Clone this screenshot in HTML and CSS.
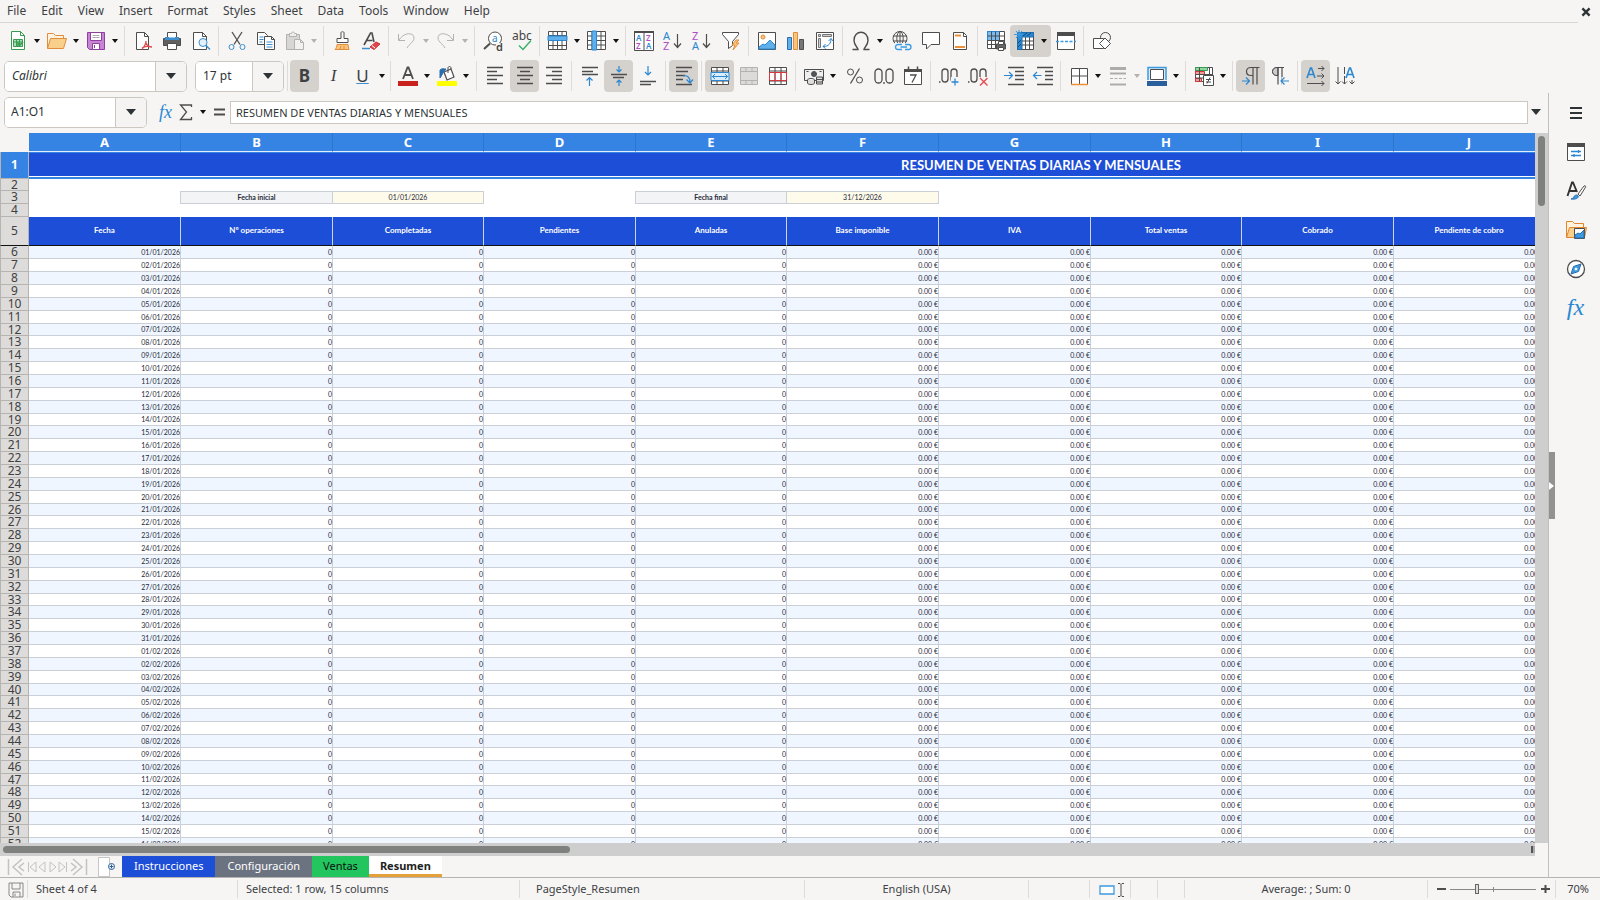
FILE: index.html
```html
<!DOCTYPE html>
<html lang="en">
<head>
<meta charset="utf-8">
<title>Resumen</title>
<link rel="stylesheet" href="styles.css">
</head>
<body>
<header class="menubar">
  <nav class="menus" aria-label="Menu">
    <button>File</button><button>Edit</button><button>View</button><button>Insert</button><button>Format</button><button>Styles</button><button>Sheet</button><button>Data</button><button>Tools</button><button>Window</button><button>Help</button>
  </nav>
  <button class="close" aria-label="Close"><svg class="ic" viewBox="0 0 10 10"><path d="M2 2l6 6M8 2L2 8" stroke="#2e3436" stroke-width="2"/></svg></button>
</header>

<div class="toolbar" role="toolbar" aria-label="Standard">
  <span class="drop"><button class="tb" aria-label="New"><svg class="ic" viewBox="0 0 20 20"><g stroke="#3a9a52"><path d="M3.500.5h9l4 4v14h-13z" fill="#fff"/><path d="M12.500.5v4h4"/><path d="M5.500 8.500h9v7h-9zM5.500 11h9M8.500 8.500v7M11.500 8.500v7" fill="#a9dfb8"/><path d="M10 15v-3l2 2 3-3" stroke-width="1.500"/></g></svg></button><button class="arrow" aria-label="New options"></button></span>
  <span class="drop"><button class="tb" aria-label="Open"><svg class="ic" viewBox="0 0 20 20"><path d="M.5 17.500v-15h6l2 2h8v3" fill="#fff3e0" stroke="#e08e3c"/><path d="M.5 17.500l3-10h16l-3 10z" fill="#f9d08b" stroke="#e08e3c"/></svg></button><button class="arrow" aria-label="Open options"></button></span>
  <span class="drop"><button class="tb" aria-label="Save"><svg class="ic" viewBox="0 0 20 20"><path d="M1.500 1.500h17v17h-15l-2-2z" fill="#c885d4" stroke="#8e3fa0"/><path d="M4.500 1.500h11v8h-11z" fill="#fff" stroke="#8e3fa0"/><path d="M6.500 4.500h7M6.500 6.500h7" stroke="#aaa"/><path d="M6.500 12.500h7v6h-7z" fill="#fff" stroke="#8e3fa0"/><path d="M8.500 14v3" stroke="#8e3fa0"/></svg></button><button class="arrow" aria-label="Save options"></button></span>
  <i class="sep"></i>
  <button class="tb" aria-label="Export as PDF"><svg class="ic" viewBox="0 0 20 20"><path d="M3.500 1.500h8l4 4v13h-12z" fill="#fff"/><path d="M11.500 1.500v4h4"/><path d="M9 18c2-2 4-5 4-8M13 12c1 3 3 4 6 4M9 17c3-2 6-2 9-1" stroke="#e2474b" stroke-width="1.300"/></svg></button>
  <button class="tb" aria-label="Print"><svg class="ic" viewBox="0 0 20 20"><path d="M1.500 7.500h17v7h-17z" fill="#606060"/><path d="M5.500 1.500h9v6h-9z" fill="#fff"/><path d="M3 9h14V6H3z" fill="#3b8fd0" stroke="none"/><path d="M5.500 12.500h9v6h-9z" fill="#fff"/><path d="M7 6h6" stroke="#fff"/></svg></button>
  <button class="tb" aria-label="Print preview"><svg class="ic" viewBox="0 0 20 20"><path d="M2.500 1.500h9l4 4v13h-13z" fill="#fff"/><path d="M11.500 1.500v4h4"/><circle cx="12" cy="11.500" r="4" fill="#e2f1fb" stroke="#3b8fd0"/><path d="M15 14.500l4 4" stroke="#3b8fd0" stroke-width="1.500"/></svg></button>
  <i class="sep"></i>
  <button class="tb" aria-label="Cut"><svg class="ic" viewBox="0 0 20 20"><path d="M5 1l8 12.500M15 1L7 13.500" stroke-width="1.300"/><circle cx="4.500" cy="16" r="2.500" stroke="#3b8fd0"/><circle cx="15.500" cy="16" r="2.500" stroke="#3b8fd0"/></svg></button>
  <button class="tb" aria-label="Copy"><svg class="ic" viewBox="0 0 20 20"><path d="M1.500 1.500h7l3 3v9h-10z" fill="#fff"/><path d="M3.500 6h4M3.500 8.500h4M3.500 11h3" stroke="#3b8fd0"/><path d="M8.500 5.500h7l3 3v10h-10z" fill="#fff"/><path d="M15.500 5.500v3h3"/><path d="M10.500 11h6M10.500 13.500h6M10.500 16h6" stroke="#3b8fd0"/></svg></button>
  <span class="drop off"><button class="tb" aria-label="Paste" disabled><svg class="ic" viewBox="0 0 20 20"><g stroke="#b4b2b0"><path d="M1.500 3.500h13v15h-13z" fill="#d8d6d4"/><path d="M4.500 5.500v-3h2c0-2 3-2 3 0h2v3z" fill="#eee"/><path d="M9.500 8.500h6l3 3v7h-9z" fill="#f2f1f0"/><path d="M15.500 8.500v3h3"/></g></svg></button><button class="arrow" aria-label="Paste options" disabled></button></span>
  <i class="sep"></i>
  <button class="tb" aria-label="Clone formatting"><svg class="ic" viewBox="0 0 20 20"><path d="M9 1.500c0-1 3-1 3 0v6h4v4H5v-4h4z" fill="#fff"/><path d="M5 13.500h11l1 5H3c1-1 2-3 2-5z" fill="#fbc47c" stroke="#e08e3c"/><path d="M8 18l1-3M12 18v-3" stroke="#e08e3c"/></svg></button>
  <button class="tb" aria-label="Clear formatting"><svg class="ic" viewBox="0 0 20 20"><path d="M3 14l6.500-12h1.500l2 9M5.500 9.500h6" stroke-width="1.600"/><path d="M1 17.500h8" stroke="#3b8fd0" stroke-width="1.500"/><path d="M9 16l6-5 4 2-6 5.500z" fill="#e2474b" stroke="#c93238"/><path d="M11 14.500l3 2.500" stroke="#fff"/></svg></button>
  <i class="sep"></i>
  <span class="drop off"><button class="tb" aria-label="Undo" disabled><svg class="ic" viewBox="0 0 20 20"><path d="M1.500 3v6.500H8M2 9c5-8 15-8 15-2 0 4-5 6-7 10" stroke="#b4b2b0"/></svg></button><button class="arrow" aria-label="Undo list" disabled></button></span>
  <span class="drop off"><button class="tb" aria-label="Redo" disabled><svg class="ic" viewBox="0 0 20 20"><path d="M17.500 3v6.500H11M17 9C12 1 2 1 2 7c0 4 5 6 7 10" stroke="#b4b2b0"/></svg></button><button class="arrow" aria-label="Redo list" disabled></button></span>
  <i class="sep"></i>
  <button class="tb" aria-label="Find and replace"><svg class="ic" viewBox="0 0 20 20"><circle cx="12" cy="7.500" r="6.500" fill="#fff"/><path d="M7 12.500L1 18" stroke-width="2"/><text x="9" y="11" font-size="10" fill="#2b87d1">a</text><path d="M13 12h7v8h-7z" fill="#f6f5f4" stroke="none"/><text x="13" y="19.500" font-size="11" font-weight="600" fill="#444">d</text></svg></button>
  <button class="tb" aria-label="Spelling"><svg class="ic" viewBox="0 0 20 20"><text x="0" y="9" font-size="12" fill="#444">abc</text><path d="M7 14.500l4 4 8-9" stroke="#3bb268" stroke-width="1.500"/></svg></button>
  <i class="sep"></i>
  <span class="drop"><button class="tb" aria-label="Row"><svg class="ic" viewBox="0 0 20 20"><path d="M.5.5h18v18H.5z" fill="#fff"/><path d="M.5 4.500h18M.5 9.500h18M.5 14.500h18M5 .5v18M9.500.5v18M14 .5v18"/><path d="M0 5h19v4.500H0z" fill="#5fb0ea" stroke="#2b87d1"/></svg></button><button class="arrow" aria-label="Row options"></button></span>
  <span class="drop"><button class="tb" aria-label="Column"><svg class="ic" viewBox="0 0 20 20"><path d="M.5.5h18v18H.5z" fill="#fff"/><path d="M.5 5h18M.5 9.500h18M.5 14h18M5 .5v18M9.500.5v18M14 .5v18"/><path d="M5 0h4.500v19H5z" fill="#5fb0ea" stroke="#2b87d1"/></svg></button><button class="arrow" aria-label="Column options"></button></span>
  <i class="sep"></i>
  <button class="tb" aria-label="Sort"><svg class="ic" viewBox="0 0 20 20"><path d="M.5.5h19v19H.5zM10 2v17.500" fill="#fff"/><path d="M0 1h20" stroke-width="2"/><g font-size="8" font-weight="600"><text x="2" y="10" fill="#2b87d1">A</text><text x="2" y="18" fill="#b04fc4">Z</text><text x="12" y="10" fill="#b04fc4">Z</text><text x="12" y="18" fill="#2b87d1">A</text></g></svg></button>
  <button class="tb" aria-label="Sort ascending"><svg class="ic" viewBox="0 0 20 20"><text x="0" y="8.500" font-size="11" fill="#2b87d1">A</text><text x="0" y="19" font-size="11" fill="#b04fc4">Z</text><path d="M14.500 3v13M11 12.500l3.500 4 3.500-4" stroke-width="1.200"/></svg></button>
  <button class="tb" aria-label="Sort descending"><svg class="ic" viewBox="0 0 20 20"><text x="0" y="8.500" font-size="11" fill="#b04fc4">Z</text><text x="0" y="19" font-size="11" fill="#2b87d1">A</text><path d="M14.500 3v13M11 12.500l3.500 4 3.500-4" stroke-width="1.200"/></svg></button>
  <button class="tb" aria-label="AutoFilter"><svg class="ic" viewBox="0 0 20 20"><path d="M1.500 1.500h16v2l-6 7v4l-4 3v-7l-6-7z" fill="#fff"/><path d="M15 9l-4 5h3l-2 5 6-7h-3l3-3z" fill="#fbc47c" stroke="#e08e3c"/></svg></button>
  <i class="sep"></i>
  <button class="tb" aria-label="Insert image"><svg class="ic" viewBox="0 0 20 20"><path d="M1.500 1.500h17v17h-17z" fill="#fff"/><circle cx="6" cy="6" r="2" fill="#fbc47c" stroke="#e08e3c"/><path d="M2 18v-2l4-3 2 1 5-5 5 5v4z" fill="#5fb0ea" stroke="#2b87d1"/></svg></button>
  <button class="tb" aria-label="Insert chart"><svg class="ic" viewBox="0 0 20 20"><path d="M1.500 6.500h4v12h-4z" fill="#5fb0ea" stroke="#2b6fb0"/><path d="M7.500 1.500h4v17h-4z" fill="#fbc47c" stroke="#e08e3c"/><path d="M13.500 8.500h4v10h-4z" fill="#777"/></svg></button>
  <button class="tb" aria-label="Pivot table"><svg class="ic" viewBox="0 0 20 20"><path d="M1.500 1.500h17v17h-17z" fill="#fff"/><path d="M3.500 3.500h2v2h-2zM7.500 3.500h9v2h-9zM3.500 7.500h2v9h-2z" fill="#ccc" stroke="#777"/><path d="M8 15.500c6 0 8-3 8-8M13.500 10L16 7.500 18 10M10.500 13L8 15.500l2.500 2" stroke="#2b87d1"/></svg></button>
  <i class="sep"></i>
  <span class="drop wide"><button class="tb" aria-label="Special character"><svg class="ic" viewBox="0 0 20 20"><path d="M1.500 18.500h5.500c0-2-4-4-4-9 0-11 14-11 14 0 0 5-4 7-4 9h5.500" stroke-width="1.400"/></svg></button><button class="arrow" aria-label="More characters"></button></span>
  <button class="tb" aria-label="Hyperlink"><svg class="ic" viewBox="0 0 20 20"><circle cx="8" cy="7.500" r="7"/><ellipse cx="8" cy="7.500" rx="3.200" ry="7"/><path d="M1 5h14M1 10h14M8 .5v14"/><path d="M3 12h17v8H3z" fill="#f6f5f4" stroke="none"/><path d="M10 13.500H6a2.500 2.500 0 000 5h4M13 13.500h3.500a2.500 2.500 0 010 5H13M8.500 16H15" stroke="#3b9ae0" stroke-width="1.300"/></svg></button>
  <button class="tb" aria-label="Comment"><svg class="ic" viewBox="0 0 20 20"><path d="M1.500 1.500h17v12H10l-4.500 4.500v-4.500h-4z" fill="#fff"/></svg></button>
  <button class="tb" aria-label="Headers and footers"><svg class="ic" viewBox="0 0 20 20"><path d="M3.500 1.500h10l3 3v14h-13z" fill="#fff"/><path d="M13.500 1.500v4h3"/><path d="M5 4.500h6M5 16h10" stroke="#ee9036" stroke-width="2"/></svg></button>
  <i class="sep"></i>
  <button class="tb" aria-label="Print area"><svg class="ic" viewBox="0 0 20 20"><path d="M1.500.5h17v17h-17z" fill="#fff"/><path d="M1.500.5h12v9h-12z" fill="#78bbf0" stroke="#2b87d1"/><path d="M1.500 5h17M1.500 9.500h17M1.500 13.500h17M5.500.5v17M9.500.5v17M13.500.5v17"/><path d="M10.500 13h9v5h-9z" fill="#666"/><path d="M12.500 10.500h5v3h-5zM12.500 16.500h5v3h-5z" fill="#fff"/></svg></button>
  <span class="drop wide on"><button class="tb" aria-label="Freeze rows and columns"><svg class="ic" viewBox="0 0 20 20"><path d="M2.500 1.500h16v17h-16z" fill="#fff"/><path d="M2.500 10h16M2.500 14h16M10.500 6v12.500M14.500 6v12.500"/><path d="M2.500 1.500h16V6H7v12.500H2.500z" fill="#2b87d1" stroke="#1f6cab"/><path d="M8 5l4-3M12 5l4-3M3 12l3-3M3 16l3-3" stroke="#114a7c"/><path d="M4-1v9M-1 3.500h9M1 0l6 7M7 0L1 7" stroke="#3b9ae0"/></svg></button><button class="arrow" aria-label="Freeze options"></button></span>
  <button class="tb" aria-label="Split window"><svg class="ic" viewBox="0 0 20 20"><path d="M1.500 1.500h17v17h-17z" fill="#fff"/><path d="M1 3h18" stroke-width="4"/><path d="M0 10.500h20" stroke="#3b9ae0" stroke-dasharray="3 1.500" stroke-width="1.500"/></svg></button>
  <i class="sep"></i>
  <button class="tb" aria-label="Show draw functions"><svg class="ic" viewBox="0 0 20 20"><circle cx="13.500" cy="6.500" r="5"/><path d="M1.500 7.500h10v10h-10z" fill="#fff"/><path d="M13 7l5.500 5.500L13 18l-5.500-5.500z" fill="#fff"/></svg></button>
</div>

<div class="toolbar fmt" role="toolbar" aria-label="Formatting">
  <div class="combo font"><input aria-label="Font name" value="Calibri"><button aria-label="Font list"></button></div>
  <div class="combo size"><input aria-label="Font size" value="17 pt"><button aria-label="Size list"></button></div>
  <i class="sep slim"></i>
  <button class="tb on glyph bold" aria-label="Bold">B</button>
  <button class="tb glyph ital" aria-label="Italic">I</button>
  <span class="drop"><button class="tb glyph under" aria-label="Underline">U</button><button class="arrow" aria-label="Underline options"></button></span>
  <i class="sep slim"></i>
  <span class="drop"><button class="tb" aria-label="Font color"><svg class="ic" viewBox="0 0 20 20"><path d="M5 13L9.500 1.500h1L15 13M6.500 9h7" stroke-width="1.800"/><path d="M0 15h20v5H0z" fill="#c9211e" stroke="none"/></svg></button><button class="arrow" aria-label="Font colors"></button></span>
  <span class="drop"><button class="tb" aria-label="Background color"><svg class="ic" viewBox="0 0 20 20"><path d="M7 6l7-3 3 8-7 3z" fill="#fff" stroke-width="1.200"/><path d="M11 7V2c0-2 3-2 3 0v1"/><path d="M3 12V4c2-2 4-1 6-1L6 7z" fill="#2b6fb0" stroke="#2b6fb0"/><path d="M0 15h20v5H0z" fill="#ff0" stroke="none"/></svg></button><button class="arrow" aria-label="Background colors"></button></span>
  <i class="sep wide"></i>
  <button class="tb" aria-label="Align left"><svg class="ic" viewBox="0 0 20 20"><path d="M1 1.500h16M1 5.500h10M1 9.500h16M1 13.500h10M1 17.500h16" stroke-width="1.300"/></svg></button>
  <button class="tb on" aria-label="Center horizontally"><svg class="ic" viewBox="0 0 20 20"><path d="M2 1.500h16M5 5.500h10M2 9.500h16M5 13.500h10M2 17.500h16" stroke-width="1.300"/></svg></button>
  <button class="tb" aria-label="Align right"><svg class="ic" viewBox="0 0 20 20"><path d="M2 1.500h16M8 5.500h10M2 9.500h16M8 13.500h10M2 17.500h16" stroke-width="1.300"/></svg></button>
  <i class="sep"></i>
  <button class="tb" aria-label="Align top"><svg class="ic" viewBox="0 0 20 20"><path d="M2 1.500h16M2 5.500h0M2 5.500h11M2 8.500h16" stroke-width="1.300"/><path d="M9.500 20v-8.500M6.500 14.500l3-3 3 3" stroke="#2b87d1" stroke-width="1.200"/></svg></button>
  <button class="tb on" aria-label="Center vertically"><svg class="ic" viewBox="0 0 20 20"><path d="M2 8.500h16M4 11.500h11" stroke-width="1.300"/><path d="M10 0v6M7.500 3.500L10 6l2.500-2.500M10 20v-6M7.500 16.500L10 14l2.500 2.500" stroke="#2b87d1" stroke-width="1.200"/></svg></button>
  <button class="tb" aria-label="Align bottom"><svg class="ic" viewBox="0 0 20 20"><path d="M2 15.500h16M2 18.500h11" stroke-width="1.300"/><path d="M10 0v9M7 6l3 3 3-3" stroke="#2b87d1" stroke-width="1.200"/></svg></button>
  <i class="sep"></i>
  <button class="tb on" aria-label="Wrap text"><svg class="ic" viewBox="0 0 20 20"><path d="M2 1.500h16M2 5.500h12M2 9.500h9M2 13.500h7M2 18.500h16" stroke-width="1.300"/><path d="M9 10c4-1 7 1 7 6M12.500 13.500L16 17l3-3.500" stroke="#2b87d1" stroke-width="1.200"/></svg></button>
  <i class="sep"></i>
  <button class="tb on" aria-label="Merge and center"><svg class="ic" viewBox="0 0 20 20"><path d="M1.500 1.500h17v17h-17zM1.500 5h17M1.500 15h17M7 1.500v17M13 1.500v17" fill="#fff"/><path d="M1 6.500h18v8H1z" fill="#d9edfb" stroke="#2b87d1"/><path d="M2 10.500h16M5 8l-2.500 2.500L5 13M15 8l2.500 2.500L15 13" stroke="#2b87d1"/></svg></button>
  <button class="tb" aria-label="Merge cells" disabled><svg class="ic" viewBox="0 0 20 20"><path d="M1.500 1.500h17v17h-17zM1.500 5.500h17M1.500 14.500h17M7 1.500v4M13 1.500v4M7 14.500v4M13 14.500v4" fill="#dcdbd9" stroke="#b4b2b0"/></svg></button>
  <button class="tb" aria-label="Unmerge cells"><svg class="ic" viewBox="0 0 20 20"><path d="M1.500 1.500h17v17h-17zM1.500 5h17M1.500 15h17M7 1.500v17M13 1.500v17" fill="#fff"/><path d="M1.500 6.500h17v8h-17zM7 6.500v8M13 6.500v8" stroke="#d8373c"/></svg></button>
  <i class="sep"></i>
  <span class="drop wide"><button class="tb" aria-label="Currency"><svg class="ic" viewBox="0 0 20 20"><path d="M.5 3.500h19v11H.5z" fill="#eee"/><circle cx="10" cy="8" r="2.500" fill="#555"/><path d="M2.500 5.500h2M15.500 5.500h2"/><ellipse cx="7" cy="14" rx="3.500" ry="1.500" fill="#fff"/><path d="M3.500 14v3c0 2 7 2 7 0v-3M12.500 11h6v7h-6zM12.500 13.500h6M12.500 16h6" fill="#ddd"/></svg></button><button class="arrow" aria-label="Currency list"></button></span>
  <button class="tb" aria-label="Percent"><svg class="ic" viewBox="0 0 20 20"><circle cx="5.500" cy="6" r="3"/><circle cx="14.500" cy="14" r="3"/><path d="M14.500 2.500l-9 15" stroke-width="1.300"/></svg></button>
  <button class="tb" aria-label="Number"><svg class="ic" viewBox="0 0 20 20"><g stroke-width="1.300"><rect x="1" y="3" width="7" height="14" rx="3.500"/><rect x="12" y="3" width="7" height="14" rx="3.500"/><path d="M10 16v2"/></g></svg></button>
  <button class="tb" aria-label="Date"><svg class="ic" viewBox="0 0 20 20"><path d="M1.500 3.500h17v15h-17z" fill="#fff"/><path d="M1 4.500h18" stroke-width="3"/><path d="M5.500.500v4M14.500.500v4" stroke-width="1.500"/><path d="M7 9h6l-4 7.500" stroke-width="1.300"/></svg></button>
  <i class="sep"></i>
  <button class="tb" aria-label="Add decimal place"><svg class="ic" viewBox="0 0 20 20"><g stroke-width="1.300"><rect x="3" y="3" width="6" height="13" rx="3"/><rect x="12" y="3" width="6" height="13" rx="3"/><path d="M0 16h1.500"/></g><path d="M12 11h8v9h-8z" fill="#f6f5f4" stroke="none"/><path d="M12.500 16h7M16 12.500v7" stroke="#2b87d1" stroke-width="1.300"/></svg></button>
  <button class="tb" aria-label="Delete decimal place"><svg class="ic" viewBox="0 0 20 20"><g stroke-width="1.300"><rect x="3" y="3" width="6" height="13" rx="3"/><rect x="12" y="3" width="6" height="13" rx="3"/><path d="M0 16h1.500"/></g><path d="M11 11h9v9h-9z" fill="#f6f5f4" stroke="none"/><path d="M12 12l7.500 7.500M19.500 12L12 19.500" stroke="#e2474b" stroke-width="1.300"/></svg></button>
  <i class="sep"></i>
  <button class="tb" aria-label="Increase indent"><svg class="ic" viewBox="0 0 20 20"><path d="M4 1.500h16M11 5.500h9M11 9.500h9M11 13.500h9M4 18.500h16" stroke-width="1.300"/><path d="M0 9.500h8M5 6l3.500 3.500L5 13" stroke="#2b87d1" stroke-width="1.200"/></svg></button>
  <button class="tb" aria-label="Decrease indent"><svg class="ic" viewBox="0 0 20 20"><path d="M4 1.500h16M12 5.500h8M12 9.500h8M12 13.500h8M4 18.500h16" stroke-width="1.300"/><path d="M.5 9.500h8M4 6L.5 9.500 4 13" stroke="#2b87d1" stroke-width="1.200"/></svg></button>
  <i class="sep"></i>
  <span class="drop"><button class="tb" aria-label="Borders"><svg class="ic" viewBox="0 0 20 20"><path d="M2.500 18V2.500h16V18M2.500 10h16M10.500 2.500V18" fill="#fff"/><path d="M2 18.500h17" stroke="#ee9036" stroke-width="1.500"/></svg></button><button class="arrow" aria-label="Border list"></button></span>
  <span class="drop off"><button class="tb" aria-label="Border style" disabled><svg class="ic" viewBox="0 0 20 20"><g stroke="#aeacaa"><path d="M2 2.500h16" stroke-width="3"/><path d="M2 7.500h16" stroke-width="2"/><path d="M2 12.500h16" stroke-dasharray="3 1.500"/><path d="M2 18.500h16" stroke-width="2"/></g></svg></button><button class="arrow" aria-label="Border styles" disabled></button></span>
  <span class="drop"><button class="tb" aria-label="Border color"><svg class="ic" viewBox="0 0 20 20"><path d="M1 14V1.500h18V14" fill="#d9edfb" stroke="#3b9ae0" stroke-width="1.500"/><path d="M3.500 3.500h13v10h-13z" fill="#fff"/><path d="M0 15h20v5H0z" fill="#2a5f9e" stroke="none"/></svg></button><button class="arrow" aria-label="Border colors"></button></span>
  <i class="sep"></i>
  <span class="drop"><button class="tb" aria-label="Conditional formatting"><svg class="ic" viewBox="0 0 20 20"><path d="M1.500 1.500h17v14h-17z" fill="#fff"/><path d="M1.500 1.500h12v3h-12z" fill="#8fd6a2" stroke="#3a9a52"/><path d="M1.500 5.500h9v3h-9zM1.500 12.500h6v3h-6z" fill="#f29a94" stroke="#d8373c"/><path d="M1.500 8.500h17M1.500 12h17M5.500 1.500v14M15.500 1.500v14"/><path d="M9.500 9.500h10v10h-10z" fill="#fff"/><path d="M12 13.500h5M12 16h5M16 11.500l-3 6"/></svg></button><button class="arrow" aria-label="Conditional list"></button></span>
  <i class="sep"></i>
  <button class="tb on" aria-label="Left to right"><svg class="ic" viewBox="0 0 20 20"><path d="M18.500 1.500H10c-6 0-6 8 0 8h2M12 1.500v17M16 1.500v17" stroke-width="1.200"/><path d="M1 15h7M5 11.500L8.500 15 5 18.500" stroke="#2b87d1" stroke-width="1.200"/></svg></button>
  <button class="tb" aria-label="Right to left"><svg class="ic" viewBox="0 0 20 20"><path d="M14 1.500H7c-6 0-6 8 0 8h1" /><path d="M8 1.500H7c-6 0-6 8 0 8h1z" fill="#ccc"/><path d="M8 1.500v17M12 1.500v17" stroke-width="1.200"/><path d="M11.500 11h8v8h-8z" fill="#f6f5f4" stroke="none"/><path d="M11 15h8M14.500 11.500L11 15l3.500 3.500" stroke="#2b87d1" stroke-width="1.200"/></svg></button>
  <i class="sep"></i>
  <button class="tb on" aria-label="Text direction left to right"><svg class="ic" viewBox="0 0 20 20"><path d="M1 12L4.500 2h1L9 12M2.500 8.500h5" stroke="#2b87d1" stroke-width="1.600"/><path d="M12 2.500h6M15.500 0L18 2.500 15.500 5M11 10h7M15.500 7.500L18 10l-2.500 2.500M1 17.500h17M15.500 15l2.500 2.500-2.500 2.500"/></svg></button>
  <button class="tb" aria-label="Text direction top to bottom"><svg class="ic" viewBox="0 0 20 20"><path d="M11 12l3.500-10h1L19 12M12.500 8.500h5" stroke="#2b87d1" stroke-width="1.600"/><path d="M3 1v17M.500 15.500L3 18l2.500-2.500M9.500 1v7M9.500 10v8M7 15.500L9.500 18l2.500-2.500M17 14v4M14.500 15.500L17 18l2.500-2.500"/></svg></button>
</div>

<main class="work">
  <section class="doc">
    <div class="formula">
      <div class="combo name"><input aria-label="Name box" value="A1:O1"><button aria-label="Name list"></button></div>
      <button class="tb fx" aria-label="Function wizard">fx</button>
      <span class="drop"><button class="tb" aria-label="Sum"><svg class="ic" viewBox="0 0 20 20"><path d="M14.500 5V3h-11l6 7-6 7.500h11v-2.500" stroke-width="1.300"/></svg></button><button class="arrow" aria-label="Sum list"></button></span>
      <button class="tb eq" aria-label="Formula"><svg class="ic" viewBox="0 0 20 20"><path d="M5 7.500h11M5 12.500h11" stroke-width="2"/></svg></button>
      <input class="line" aria-label="Input line" value="RESUMEN DE VENTAS DIARIAS Y MENSUALES">
      <button class="expand" aria-label="Expand formula bar"></button>
    </div>
    <div class="sheet">
      <div class="cells">
        <table>
          <colgroup id="cols"></colgroup>
          <thead id="letters"></thead>
          <tbody class="top">
            <tr class="r1"><th scope="row">1</th><td class="title" colspan="11">RESUMEN DE VENTAS DIARIAS Y MENSUALES</td></tr>
            <tr class="r2"><th scope="row">2</th><td colspan="11"></td></tr>
            <tr class="r3"><th scope="row">3</th><td class="edge"></td><td class="label">Fecha inicial</td><td class="date">01/01/2026</td><td class="edge"></td><td class="label">Fecha final</td><td class="date">31/12/2026</td><td colspan="5"></td></tr>
            <tr class="r4"><th scope="row">4</th><td colspan="11"></td></tr>
            <tr class="r5"><th scope="row">5</th><td>Fecha</td><td>Nº operaciones</td><td>Completadas</td><td>Pendientes</td><td>Anuladas</td><td>Base imponible</td><td>IVA</td><td>Total ventas</td><td>Cobrado</td><td>Pendiente de cobro</td><td></td></tr>
          </tbody>
          <tbody class="data" id="data"></tbody>
        </table>
      </div>
      <div class="vscroll"><i></i></div>
    </div>
    <div class="hscroll"><i></i><b></b></div>
    <div class="tabs">
      <div class="nav">
        <button aria-label="First sheet"><svg class="ic" viewBox="0 0 20 20"><path d="M2.500 2v16M16 2L7 10l9 8M18 6l-5 4 5 4" stroke="#c4c2c0" stroke-width="1.500"/></svg></button>
        <button aria-label="Previous sheet"><svg class="ic" viewBox="0 0 20 20"><path d="M1.500 5v10M9 5l-6 5 6 5zM18 5l-6 5 6 5z" stroke="#c4c2c0"/></svg></button>
        <button aria-label="Next sheet"><svg class="ic" viewBox="0 0 20 20"><path d="M18.500 5v10M2 5l6 5-6 5zM11 5l6 5-6 5z" stroke="#c4c2c0"/></svg></button>
        <button aria-label="Last sheet"><svg class="ic" viewBox="0 0 20 20"><path d="M17.500 2v16M4 2l9 8-9 8M2 6l5 4-5 4" stroke="#c4c2c0" stroke-width="1.500"/></svg></button>
      </div>
      <button class="add" aria-label="Add sheet"><svg class="ic" viewBox="0 0 20 20"><path d="M2.500.500h11v19h-11z" fill="#fff" stroke="#c8c6c4"/><circle cx="15.500" cy="9.500" r="3" fill="#fff" stroke="#2a5f9e"/><path d="M13.500 9.500h4M15.500 7.500v4" stroke="#2a5f9e"/></svg></button>
      <button class="tab blue">Instrucciones</button><button class="tab gray">Configuración</button><button class="tab green">Ventas</button><button class="tab current">Resumen</button>
    </div>
  </section>
  <aside class="side">
    <button class="grip" aria-label="Hide sidebar"></button>
    <button aria-label="Sidebar settings"><svg class="ic" viewBox="0 0 20 20"><path d="M4 5h12M4 10h12M4 15h12" stroke="#2e3436" stroke-width="2"/></svg></button>
    <button aria-label="Properties"><svg class="ic" viewBox="0 0 20 20"><path d="M1.500 1.500h17v17h-17z" fill="#fff"/><path d="M1 3h18" stroke-width="4"/><path d="M5 9.500h10M5 13.500h10M12.500 8v3M8 12v3" stroke="#2b87d1" stroke-width="1.300"/></svg></button>
    <button aria-label="Styles"><svg class="ic" viewBox="0 0 20 20"><path d="M1.500 15L6 1.500h1L11 11M3.500 10h6.500" stroke="#333" stroke-width="1.900"/><path d="M12 13l6-8c2-1 2 1 1 2l-5 8z" fill="#fff"/><path d="M5 18c3 0 2-4 6-4 3 1 1 5-6 4z" fill="#3b9ae0" stroke="#2b6fb0"/></svg></button>
    <button aria-label="Gallery"><svg class="ic" viewBox="0 0 20 20"><path d="M.5 17.500v-16h6l2 2h9v4" fill="#fff3e0" stroke="#e0852c"/><path d="M.5 17.500l3-10h17l-2 10z" fill="#f9d08b" stroke="#e0852c"/><path d="M8.500 8.500h10v10h-10z" fill="#fff"/><path d="M9 18v-3l3-2 2 1 4-4v8z" fill="#3b9ae0" stroke="#2b6fb0"/></svg></button>
    <button aria-label="Navigator"><svg class="ic" viewBox="0 0 20 20"><circle cx="10" cy="10" r="8.500" fill="#fff" stroke-width="1.300"/><path d="M15 5l-2.500 7.500L5 15l2.500-7.500z" fill="#3b9ae0" stroke="#2b6fb0"/><circle cx="10" cy="10" r="1" fill="#fff" stroke="#fff"/></svg></button>
    <button class="fx" aria-label="Functions">fx</button>
  </aside>
</main>

<footer class="status">
  <span><svg class="ic" viewBox="0 0 20 20"><path d="M1 3h14v14H3l-2-2zM4 3v6h8V3M5 17v-5h7v5M7 13.500V16" stroke="#8a8886"/></svg></span>
  <span>Sheet 4 of 4</span><span>Selected: 1 row, 15 columns</span><span class="far">PageStyle_Resumen</span><span class="mid">English (USA)</span><span></span>
  <span class="mid"><svg class="ic modes" viewBox="0 0 26 20"><path d="M3 6h14v8H3z" fill="#fff" stroke="#3b9ae0" stroke-width="1.300"/><path d="M21 3.500h2l1 1 1-1h2M24 4.500v11M21 16.500h2l1-1 1 1h2"/></svg></span>
  <span></span><span></span><span class="mid">Average: ; Sum: 0</span>
  <span class="zoom"><button aria-label="Zoom out"><svg class="ic" viewBox="0 0 10 10"><path d="M1 5h9" stroke-width="2"/></svg></button><input type="range" aria-label="Zoom" min="0" max="100" value="30"><button aria-label="Zoom in"><svg class="ic" viewBox="0 0 10 10"><path d="M1 5h9M5.500 1v8" stroke-width="2"/></svg></button></span>
  <span class="mid">70%</span>
</footer>
<script src="sheet.js"></script>
</body>
</html>
```
FILE: styles.css
```css
* { box-sizing: border-box; }
body {
  margin: 0;
  height: 100vh;
  display: flex;
  flex-direction: column;
  overflow: hidden;
  background: #f6f5f4;
  color: #3d4144;
  font: 12px/16px "Noto Sans", "Open Sans", sans-serif;
}
button {
  padding: 0;
  border: 0;
  background: none;
  color: inherit;
  font: inherit;
}
input {
  min-width: 0;
  margin: 0;
  border: 0;
  font: inherit;
  color: #2e3436;
}
.ic {
  display: block;
  width: 20px;
  height: 20px;
  fill: none;
  stroke: #4d4d4d;
  stroke-width: 1;
  overflow: visible;
}
.ic text { stroke: none; font-family: "Noto Sans", sans-serif; }

.menubar { display: flex; align-items: center; height: 23px; flex: none; }
.menus {
  flex: 1;
  display: flex;
  align-self: stretch;
  border-bottom: 1px solid #dad8d6;
}
.menus button { padding: 0 8px 0 7px; }
.close { width: 22px; padding: 0 6px 0 2px; }
.close .ic { width: 12px; height: 12px; }

.toolbar {
  display: flex;
  align-items: center;
  height: 36px;
  flex: none;
  padding-left: 3px;
}
.toolbar.fmt { height: 34px; padding-left: 4px; }
.tb {
  width: 29px;
  height: 32px;
  flex: none;
  display: flex;
  align-items: center;
  justify-content: center;
  border-radius: 4px;
}
.drop { display: flex; width: 39px; flex: none; border-radius: 4px; }
.drop.wide { width: 41px; }
.on { background: #d5d1cd; }
.arrow { width: 10px; display: flex; align-items: center; justify-content: center; }
.arrow::after {
  content: "";
  border: 3px solid transparent;
  border-top: 4px solid #111;
  border-bottom: 0;
}
.off .arrow::after { border-top-color: #b4b2b0; }
.sep { flex: none; width: 7px; height: 30px; display: flex; justify-content: center; }
.sep::before { content: ""; width: 1px; background: #dedcda; }
.drop + .sep { width: 8px; }
.sep.slim { width: 6px; }
.drop + .sep.wide { width: 10px; }
.glyph { font-size: 17px; }
.bold { font-weight: 700; }
.ital { font-family: "Liberation Serif", serif; font-style: italic; }
.under { text-decoration: underline; text-decoration-color: #3b8fd0; }
.fx { font: italic 18px "Liberation Serif", serif; color: #2b87d1; }

.combo {
  display: flex;
  height: 31px;
  border: 1px solid #cdc7c2;
  border-radius: 5px;
  background: #fff;
  overflow: hidden;
}
.combo input { flex: 1; padding: 0 7px; background: #fff; outline: 0; }
.combo button {
  width: 31px;
  display: flex;
  align-items: center;
  justify-content: center;
  border-left: 1px solid #cdc7c2;
  background: #f5f4f2;
}
.combo button::after, .expand::after {
  content: "";
  border: 5px solid transparent;
  border-top: 6px solid #2e3436;
  border-bottom: 0;
}
.font { width: 183px; margin-right: 8px; }
.font input { font-style: italic; }
.size { width: 89px; }
.name { width: 143px; margin-right: 8px; }
.name input { padding-left: 6px; }

.work { flex: 1; min-height: 0; display: flex; }
.doc { flex: 1; min-width: 0; display: flex; flex-direction: column; }
.formula { display: flex; align-items: center; height: 40px; flex: none; padding: 0 0 2px 4px; }
.fx.tb { width: 21px; }
.formula .drop { width: 32px; }
.formula .drop .tb { width: 22px; }
.eq.tb { width: 22px; }
.line {
  flex: 1;
  height: 23px;
  padding: 0 5px;
  border: 1px solid #cdc7c2;
  background: #fff;
  font-size: 11px;
}
.expand { width: 20px; display: flex; justify-content: center; padding-right: 4px; }

.sheet { flex: 1; min-height: 0; display: flex; }
.cells { flex: 1; min-width: 0; overflow: hidden; background: #fff; }
table { width: 2053px; table-layout: fixed; border-spacing: 0; }
.head { width: 29px; }
.w151 { width: 151px; }
.w152 { width: 152px; }
th, td { padding: 0; white-space: nowrap; }
thead th {
  height: 19px;
  background: #3584e4;
  border-right: 1px solid #2c74cc;
  border-bottom: 1px solid #e4eefb;
  color: #fff;
  font-size: 13px;
  line-height: 17px;
}
thead th:first-child { background: #f6f5f4; border-color: #f6f5f4; }
tbody th {
  border: solid #b6b4b1;
  border-width: 0 1px 1px;
  background: #dedcda;
  font-size: 12px;
  font-weight: 400;
  line-height: 12px;
}
.top td, .data td { font: 7px/11px Lato, sans-serif; color: #1f2937; }
.r1 { height: 27px; }
.r1 th { background: #3584e4; color: #fff; font-weight: 700; }
.r1 .title {
  background: #1d4ed8;
  border: solid #3584e4;
  border-width: 1px 0 2px;
  box-shadow: inset 0 -1px #fff;
  color: #fff;
  text-align: center;
  font-size: 13px;
  font-weight: 700;
  line-height: 18px;
}
.r2 { height: 12px; }
.r2 th { line-height: 11px; }
.r3, .r4 { height: 13px; }
.r3 .label, .r3 .date { text-align: center; border: 1px solid #cbd0d8; border-left: 0; }
.r3 .label { background: #f3f4f6; font-weight: 700; }
.r3 .date { background: #fffbeb; }
.r3 .edge { border-right: 1px solid #cbd0d8; }
.r5 { height: 29px; }
.r5 th, .r5 td { border-bottom: 1px solid #111; }
.r5 td {
  padding-bottom: 2px;
  background: #1d4ed8;
  border-right: 1px solid #cbd5e1;
  color: #fff;
  text-align: center;
  font-size: 8px;
  font-weight: 700;
}
.data tr { height: 13px; }
.data tr:nth-child(7n) { height: 12px; }
.data tr:nth-child(7n) th { line-height: 11px; }
.data td {
  border-right: 1px solid #cbd0d8;
  border-bottom: 1px solid #cbd0d8;
  text-align: right;
}
.data tr:nth-child(odd) td { background: #eff6ff; }

.vscroll { width: 13px; padding: 3px 3px; background: #cecece; }
.vscroll i { display: block; height: 70px; border-radius: 4px; background: #7f817f; }
.hscroll { height: 13px; flex: none; display: flex; justify-content: space-between; margin-right: 13px; padding: 3px 0 3px 3px; background: #cecece; }
.hscroll i { width: 37%; border-radius: 4px; background: #7f817f; }
.hscroll b { width: 4px; background: #555; border-right: 2px solid #aaa; }
.tabs { display: flex; height: 22px; flex: none; border-bottom: 1px solid #b6b4b1; }
.nav { display: flex; padding-left: 6px; width: 96px; align-items: center; }
.nav button { width: 21px; }
.add { width: 26px; }
.tab { height: 21px; padding: 0 12px 2px; font-size: 11px; }
.blue { background: #1d4ed8; color: #fff; }
.gray { background: #6b7280; color: #fff; }
.green { background: #22c55e; color: #111; padding: 0 11px 2px; }
.current { background: #fff; padding: 1px 11px 0; font-weight: 700; color: #222; border-bottom: 3px solid #e5a03a; }

.side {
  position: relative;
  width: 52px;
  display: flex;
  flex-direction: column;
  align-items: center;
  padding: 0 0 0 2px;
  border-left: 1px solid #c2c0bd;
  border-bottom: 1px solid #b6b4b1;
}
.side button { height: 39px; }
.side .grip {
  position: absolute;
  left: 0;
  top: 50%;
  width: 6px;
  height: 67px;
  margin-top: -33px;
  background: #929391;
  display: flex;
  align-items: center;
}
.grip::after { content: ""; border: 4px solid transparent; border-left: 5px solid #fff; border-right: 0; }
.side .fx { font-size: 24px; }

.status {
  flex: none;
  height: 22px;
  display: grid;
  grid-template-columns: 28px 210fr 282fr 285fr 224fr 61px 41px 27px 27px 243fr 128px 44px;
  align-items: center;
  font-size: 11px;
}
.status > span { height: 18px; padding-left: 8px; border-right: 1px solid #dedcda; line-height: 18px; white-space: nowrap; }
.status > span:last-child { border: 0; }
.status > .far { padding-left: 16px; }
.status > .mid { padding: 0; display: flex; justify-content: center; }
.status .modes { width: 26px; }
.status > .zoom { display: flex; align-items: center; padding-right: 5px; }
.zoom .ic { width: 10px; height: 10px; }
.zoom input {
  flex: 1;
  height: 16px;
  margin: 0 4px;
  appearance: none;
  background: linear-gradient(#8a8886, #8a8886) center / 100% 1px no-repeat, linear-gradient(#8a8886, #8a8886) 50% 50% / 1px 5px no-repeat;
}
.zoom input::-webkit-slider-thumb { appearance: none; width: 4px; height: 10px; border: 1px solid #666; background: #ddd; }
```
FILE: sheet.js
```js
const letters = "ABCDEFGHIJ";
const widths = [152, 152, 151, 152, 151];

// One column per letter, then the remaining width of the merged title.
document.getElementById("cols").innerHTML =
  '<col class="head">' +
  [...letters].map((_, i) => `<col class="w${widths[i % 5]}">`).join("") +
  "<col>";

document.getElementById("letters").innerHTML =
  "<tr><th></th>" + [...letters].map(l => `<th scope="col">${l}</th>`).join("") + "<th></th></tr>";

const two = n => String(n).padStart(2, "0");
let rows = "";
for (let i = 0; i < 47; i++) {
  const d = new Date(2026, 0, 1 + i);
  rows += `<tr><th scope="row">${i + 6}</th><td>${two(d.getDate())}/${two(d.getMonth() + 1)}/${d.getFullYear()}</td>` +
    "<td>0</td>".repeat(4) + "<td>0.00 €</td>".repeat(5) + "<td></td></tr>";
}
document.getElementById("data").innerHTML = rows;
```
